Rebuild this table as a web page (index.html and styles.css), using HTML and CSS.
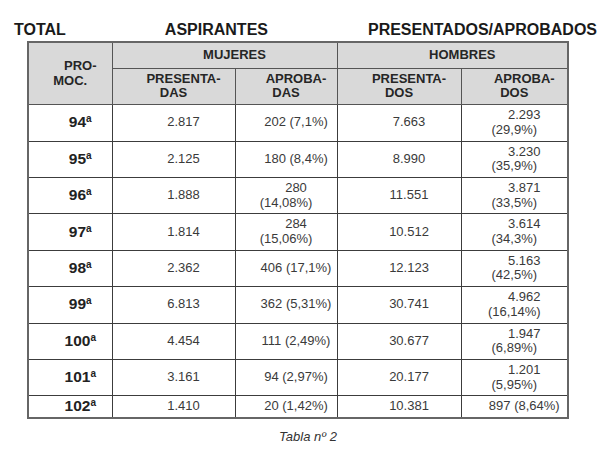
FILE: index.html
```html
<!DOCTYPE html>
<html lang="es">
<head>
<meta charset="utf-8">
<title>Tabla nº 2</title>
<link rel="stylesheet" href="styles.css">
</head>
<body>
<div class="page">
  <div class="titles">
    <span class="t-total">TOTAL</span>
    <span class="t-asp">ASPIRANTES</span>
    <span class="t-pres">PRESENTADOS/APROBADOS</span>
  </div>
  <table class="data">
    <colgroup>
      <col class="c1"><col class="c2"><col class="c3"><col class="c4"><col class="c5">
    </colgroup>
    <thead>
      <tr class="h1">
        <th rowspan="2">PRO-<br>MOC.</th>
        <th colspan="2">MUJERES</th>
        <th colspan="2">HOMBRES</th>
      </tr>
      <tr class="h2">
        <th>PRESENTA-<br>DAS</th>
        <th>APROBA-<br>DAS</th>
        <th>PRESENTA-<br>DOS</th>
        <th>APROBA-<br>DOS</th>
      </tr>
    </thead>
    <tbody>
      <tr><td class="pr">94<sup>a</sup></td><td>2.817</td><td>202 (7,1%)</td><td>7.663</td><td>2.293 (29,9%)</td></tr>
      <tr><td class="pr">95<sup>a</sup></td><td>2.125</td><td>180 (8,4%)</td><td>8.990</td><td>3.230 (35,9%)</td></tr>
      <tr><td class="pr">96<sup>a</sup></td><td>1.888</td><td>280 (14,08%)</td><td>11.551</td><td>3.871 (33,5%)</td></tr>
      <tr><td class="pr">97<sup>a</sup></td><td>1.814</td><td>284 (15,06%)</td><td>10.512</td><td>3.614 (34,3%)</td></tr>
      <tr><td class="pr">98<sup>a</sup></td><td>2.362</td><td>406 (17,1%)</td><td>12.123</td><td>5.163 (42,5%)</td></tr>
      <tr><td class="pr">99<sup>a</sup></td><td>6.813</td><td>362 (5,31%)</td><td>30.741</td><td>4.962 (16,14%)</td></tr>
      <tr><td class="pr">100<sup>a</sup></td><td>4.454</td><td>111 (2,49%)</td><td>30.677</td><td>1.947 (6,89%)</td></tr>
      <tr><td class="pr">101<sup>a</sup></td><td>3.161</td><td>94 (2,97%)</td><td>20.177</td><td>1.201 (5,95%)</td></tr>
      <tr><td class="pr">102<sup>a</sup></td><td>1.410</td><td>20 (1,42%)</td><td>10.381</td><td>897 (8,64%)</td></tr>
    </tbody>
  </table>
  <div class="caption">Tabla nº 2</div>
</div>
</body>
</html>
```

FILE: styles.css
```css
html, body {
  margin: 0;
  padding: 0;
  background: #ffffff;
}

.page {
  width: 616px;
  height: 450px;
  font-family: "Liberation Sans", Arial, sans-serif;
  color: #333333;
  padding-top: 20px;
  box-sizing: border-box;
}

.titles {
  display: flex;
  gap: 99px;
  padding-left: 14px;
  font-size: 16px;
  line-height: 19px;
  font-weight: bold;
  color: #1a1a1a;
  height: 21px;
}

.titles .t-pres {
  margin-left: 1px;
}

.data {
  margin-left: 27px;
  border-collapse: collapse;
  table-layout: fixed;
  width: 541px;
  border: 2px solid #666666;
}

.c1 { width: 84px; }
.c2 { width: 123px; }
.c3 { width: 102px; }
.c4 { width: 124px; }
.c5 { width: 107px; }

.data th,
.data td {
  border: 1px solid #3c3c3c;
  padding: 3px 5px;
  line-height: 14.7px;
  text-align: center;
  text-indent: 20px;
  vertical-align: middle;
  font-size: 13px;
}

.data th {
  background: #d9d9d9;
  font-weight: bold;
  color: #262626;
  border-color: #555555;
}

.data tr.h1 th {
  padding-top: 5px;
  padding-bottom: 5px;
}

.data td {
  color: #3a3a3a;
}

.data td.pr {
  font-weight: bold;
  font-size: 15.5px;
  color: #222222;
  text-indent: 20px;
}

.data td.pr sup {
  font-size: 10px;
  line-height: 0;
  vertical-align: 5px;
}

.caption {
  margin-top: 10px;
  text-align: center;
  font-style: italic;
  font-size: 13px;
  line-height: 15px;
  color: #333333;
}
```
